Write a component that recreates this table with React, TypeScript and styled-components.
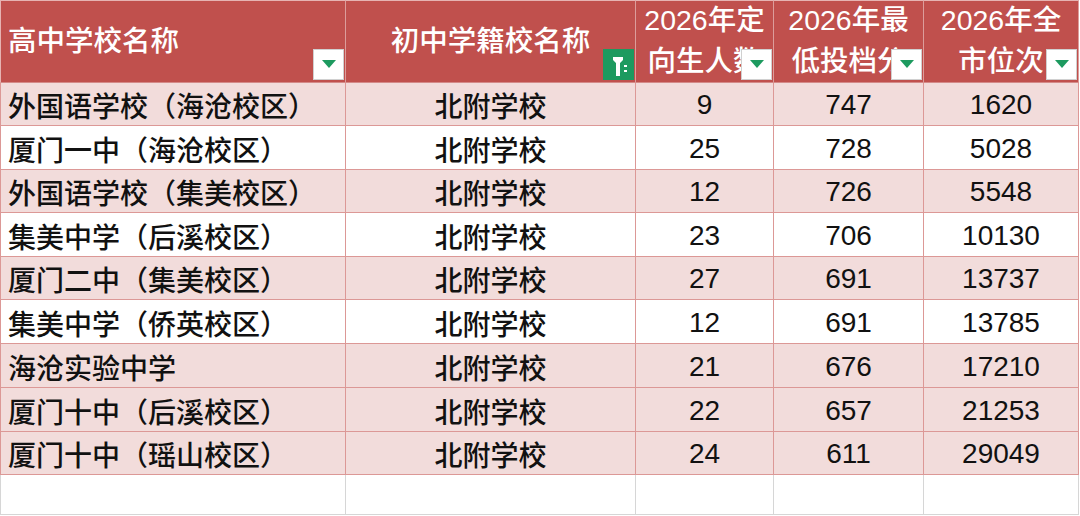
import React from 'react';
import styled, { createGlobalStyle } from 'styled-components';

const GlobalStyle = createGlobalStyle`
  html, body {
    margin: 0;
    padding: 0;
    background: #ffffff;
  }
  body {
    font-family: "Liberation Sans", "Noto Sans CJK SC", sans-serif;
  }
`;

const COLS = '346px 290px 138px 150px 155px';

const Sheet = styled.div`
  width: 1080px;
  height: 516px;
  overflow: hidden;
  background: #ffffff;
`;

const Row = styled.div<{ $h: number }>`
  display: grid;
  grid-template-columns: ${COLS};
  height: ${(p) => p.$h}px;
`;

const HeadCell = styled.div<{ $align: 'left' | 'center' }>`
  position: relative;
  box-sizing: border-box;
  background: #c0504d;
  color: #ffffff;
  font-size: 28.5px;
  font-weight: 500;
  line-height: 41px;
  border-right: 1px solid #dc9d9b;
  border-top: 1px solid #e6b3b2;
  border-bottom: 1px solid #d48a88;
  display: flex;
  flex-direction: column;
  justify-content: center;
  align-items: ${(p) => (p.$align === 'left' ? 'flex-start' : 'center')};
  padding: ${(p) => (p.$align === 'left' ? '0 0 0 7px' : '0')};
  padding-bottom: 1px;
  overflow: hidden;
  white-space: nowrap;
  &:first-child {
    border-left: 1px solid #e6b3b2;
  }
`;

const HeadLine = styled.span`
  display: block;
`;

const Cell = styled.div<{ $align: 'left' | 'center'; $tone: 'pink' | 'white' | 'blank' }>`
  box-sizing: border-box;
  background: ${(p) => (p.$tone === 'pink' ? '#f2dcdb' : '#ffffff')};
  border-right: 1px solid ${(p) => (p.$tone === 'blank' ? '#d6d6d6' : '#dc9896')};
  border-bottom: 1px solid ${(p) => (p.$tone === 'blank' ? '#d6d6d6' : '#dc9896')};
  color: #111111;
  font-size: 28px;
  font-weight: 500;
  display: flex;
  align-items: center;
  justify-content: ${(p) => (p.$align === 'left' ? 'flex-start' : 'center')};
  padding-left: ${(p) => (p.$align === 'left' ? '7px' : '0')};
  padding-top: 2px;
  white-space: nowrap;
  &:first-child {
    border-left: 1px solid ${(p) => (p.$tone === 'blank' ? '#d6d6d6' : '#dc9896')};
  }
`;

const DropButton = styled.div`
  position: absolute;
  right: 1px;
  bottom: 2px;
  width: 31px;
  height: 31px;
  box-sizing: border-box;
  background: #ffffff;
  border: 1px solid #d0d0d0;
  display: flex;
  align-items: center;
  justify-content: center;
`;

const FilterButton = styled.div`
  position: absolute;
  right: 1px;
  bottom: 2px;
  width: 31px;
  height: 31px;
  background: #1d9a5f;
`;

const Triangle = () => (
  <svg width="14" height="9" viewBox="0 0 14 9">
    <polygon points="0,0 14,0 7,8" fill="#1d9a5f" />
  </svg>
);

const FilterIcon = () => (
  <svg width="31" height="31" viewBox="0 0 31 31">
    <polygon points="10,8 20,8 20,11 17,14 17,27 13,27 13,14 10,11" fill="#ffffff" />
    <rect x="21" y="16" width="3" height="2" fill="#ffffff" />
    <rect x="21" y="21" width="3" height="2" fill="#ffffff" />
  </svg>
);

type Head = { lines: string[]; align: 'left' | 'center'; filter?: boolean };

const heads: Head[] = [
  { lines: ['高中学校名称'], align: 'left' },
  { lines: ['初中学籍校名称'], align: 'center', filter: true },
  { lines: ['2026年定', '向生人数'], align: 'center' },
  { lines: ['2026年最', '低投档分'], align: 'center' },
  { lines: ['2026年全', '市位次'], align: 'center' },
];

const rows: { cells: string[]; tone: 'pink' | 'white'; h: number }[] = [
  { cells: ['外国语学校（海沧校区）', '北附学校', '9', '747', '1620'], tone: 'pink', h: 43 },
  { cells: ['厦门一中（海沧校区）', '北附学校', '25', '728', '5028'], tone: 'white', h: 44 },
  { cells: ['外国语学校（集美校区）', '北附学校', '12', '726', '5548'], tone: 'pink', h: 43 },
  { cells: ['集美中学（后溪校区）', '北附学校', '23', '706', '10130'], tone: 'white', h: 44 },
  { cells: ['厦门二中（集美校区）', '北附学校', '27', '691', '13737'], tone: 'pink', h: 43 },
  { cells: ['集美中学（侨英校区）', '北附学校', '12', '691', '13785'], tone: 'white', h: 44 },
  { cells: ['海沧实验中学', '北附学校', '21', '676', '17210'], tone: 'pink', h: 44 },
  { cells: ['厦门十中（后溪校区）', '北附学校', '22', '657', '21253'], tone: 'pink', h: 44 },
  { cells: ['厦门十中（瑶山校区）', '北附学校', '24', '611', '29049'], tone: 'pink', h: 43 },
];

export default function App() {
  return (
    <>
      <GlobalStyle />
      <Sheet>
        <Row $h={83}>
          {heads.map((h, i) => (
            <HeadCell key={i} $align={h.align}>
              {h.lines.map((l) => (
                <HeadLine key={l}>{l}</HeadLine>
              ))}
              {h.filter ? (
                <FilterButton>
                  <FilterIcon />
                </FilterButton>
              ) : (
                <DropButton>
                  <Triangle />
                </DropButton>
              )}
            </HeadCell>
          ))}
        </Row>
        {rows.map((r, i) => (
          <Row key={i} $h={r.h}>
            {r.cells.map((c, j) => (
              <Cell key={j} $align={j === 0 ? 'left' : 'center'} $tone={r.tone}>
                {c}
              </Cell>
            ))}
          </Row>
        ))}
        <Row $h={40}>
          {heads.map((_, j) => (
            <Cell key={j} $align="center" $tone="blank" />
          ))}
        </Row>
      </Sheet>
    </>
  );
}
